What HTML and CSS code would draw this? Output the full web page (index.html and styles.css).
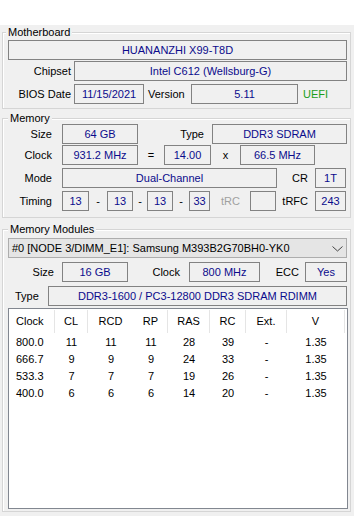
FILE: index.html
```html
<!DOCTYPE html>
<html lang="en">
<head>
    <meta charset="UTF-8">
    <title>Memory</title>
    <link rel="stylesheet" href="styles.css">
</head>
<body>
    <div class="tabbar"></div>

    <div class="group board">
        <span class="group-title">Motherboard</span>
        <div class="row">
            <div class="field f-name">HUANANZHI X99-T8D</div>
        </div>
        <div class="row mt1">
            <div class="label lbl-board">Chipset</div>
            <div class="field f-chipset">Intel C612 (Wellsburg-G)</div>
        </div>
        <div class="row mt3">
            <div class="label lbl-board">BIOS Date</div>
            <div class="field f-bios">11/15/2021</div>
            <div class="label lbl-version">Version</div>
            <div class="field f-version">5.11</div>
            <div class="label uefi">UEFI</div>
        </div>
    </div>

    <div class="group memory">
        <span class="group-title">Memory</span>
        <div class="row">
            <div class="label lbl-mem">Size</div>
            <div class="field f-size">64 GB</div>
            <div class="label lbl-type">Type</div>
            <div class="field f-type">DDR3 SDRAM</div>
        </div>
        <div class="row mt1">
            <div class="label lbl-mem">Clock</div>
            <div class="field f-size">931.2 MHz</div>
            <div class="label sep sep-eq">=</div>
            <div class="field f-mult">14.00</div>
            <div class="label sep sep-x">x</div>
            <div class="field f-bus">66.5 MHz</div>
        </div>
        <div class="row mt3">
            <div class="label lbl-mem">Mode</div>
            <div class="field f-mode">Dual-Channel</div>
            <div class="label lbl-cr">CR</div>
            <div class="field f-cr">1T</div>
        </div>
        <div class="row mt3">
            <div class="label lbl-mem">Timing</div>
            <div class="field f-t1">13</div>
            <div class="label sep sep-a">-</div>
            <div class="field f-t2">13</div>
            <div class="label sep sep-b">-</div>
            <div class="field f-t3">13</div>
            <div class="label sep sep-c">-</div>
            <div class="field f-t4">33</div>
            <div class="label lbl-trc">tRC</div>
            <div class="field f-trc"></div>
            <div class="label lbl-cr lbl-trfc">tRFC</div>
            <div class="field f-cr">243</div>
        </div>
    </div>

    <div class="group modules">
        <span class="group-title">Memory Modules</span>
        <div class="select">
            <span>#0 [NODE 3/DIMM_E1]: Samsung M393B2G70BH0-YK0</span>
            <svg class="chevron" width="11" height="6" viewBox="0 0 11 6">
                <path d="M0.5 0.5 L5.5 5 L10.5 0.5" fill="none" stroke="#444" stroke-width="1"/>
            </svg>
        </div>
        <div class="row mt4">
            <div class="label lbl-msize">Size</div>
            <div class="field f-msize">16 GB</div>
            <div class="label lbl-mclock">Clock</div>
            <div class="field f-mclock">800 MHz</div>
            <div class="label lbl-ecc">ECC</div>
            <div class="field f-ecc">Yes</div>
        </div>
        <div class="row mt4">
            <div class="label lbl-mtype">Type</div>
            <div class="field f-mtype">DDR3-1600 / PC3-12800 DDR3 SDRAM RDIMM</div>
        </div>

        <div class="listview">
            <div class="lv-head cols">
                <div class="c-clock">Clock</div>
                <div>CL</div>
                <div class="nodiv">RCD</div>
                <div>RP</div>
                <div>RAS</div>
                <div>RC</div>
                <div>Ext.</div>
                <div>V</div>
            </div>
            <div class="lv-row cols">
                <div class="c-clock">800.0</div><div>11</div><div>11</div><div>11</div><div>28</div><div>39</div><div>-</div><div>1.35</div>
            </div>
            <div class="lv-row cols">
                <div class="c-clock">666.7</div><div>9</div><div>9</div><div>9</div><div>24</div><div>33</div><div>-</div><div>1.35</div>
            </div>
            <div class="lv-row cols">
                <div class="c-clock">533.3</div><div>7</div><div>7</div><div>7</div><div>19</div><div>26</div><div>-</div><div>1.35</div>
            </div>
            <div class="lv-row cols">
                <div class="c-clock">400.0</div><div>6</div><div>6</div><div>6</div><div>14</div><div>20</div><div>-</div><div>1.35</div>
            </div>
        </div>
    </div>
</body>
</html>
```

FILE: styles.css
```css
body {
    margin: 0;
    width: 354px;
    height: 516px;
    overflow: hidden;
    background: #f0f0f0;
    font-family: "Liberation Sans", Arial, sans-serif;
    font-size: 11px;
    color: #000;
}

.tabbar {
    height: 25px;
    background: #fff;
}

/* group boxes */
.group {
    position: relative;
    box-sizing: border-box;
    width: 349px;
    margin-left: 2px;
    padding: 0 3px 0 5px;
    border: 1px solid #d5d5d5;
    box-shadow: inset 1px 1px 0 #fff;
}

.group-title {
    position: absolute;
    top: -7px;
    left: 5px;
    padding: 0 2px;
    line-height: 13px;
    background: #f0f0f0;
}

.board {
    margin-top: 7px;
    padding-top: 7px;
    padding-bottom: 4px;
}

.board .group-title {
    left: 3px;
}

.memory {
    margin-top: 9px;
    padding-top: 5px;
    padding-bottom: 6px;
}

.modules {
    margin-top: 11px;
    padding-top: 8px;
    padding-bottom: 2px;
}

/* rows and fields */
.row {
    display: flex;
    height: 20px;
}

.mt1 { margin-top: 1px; }
.mt3 { margin-top: 3px; }
.mt4 { margin-top: 4px; }

.label {
    box-sizing: border-box;
    line-height: 20px;
    white-space: nowrap;
}

.field {
    box-sizing: border-box;
    height: 20px;
    border: 1px solid #828282;
    color: #0b0b8c;
    text-align: center;
    line-height: 18px;
    white-space: nowrap;
    overflow: hidden;
}

.sep {
    text-align: center;
}

/* motherboard */
.f-name { width: 339px; }
.lbl-board { width: 63px; margin-right: 3px; text-align: right; }
.f-chipset { width: 273px; }
.f-bios { width: 70px; }
.lbl-version { width: 47px; padding-left: 4px; }
.f-version { width: 107px; }
.uefi { padding-left: 5px; color: #1a9e1a; }

/* memory */
.lbl-mem { width: 44px; margin-right: 10px; text-align: right; }
.f-size { width: 76px; }
.lbl-type { width: 74px; padding-right: 8px; text-align: right; }
.f-type { width: 135px; }
.sep-eq { width: 26px; }
.f-mult { width: 47px; }
.sep-x { width: 29px; }
.f-bus { width: 75px; }
.f-mode { width: 215px; }
.lbl-cr { width: 38px; padding-right: 7px; text-align: right; }
.f-cr { width: 31px; }
.f-t1 { width: 27px; }
.sep-a { width: 18px; }
.f-t2 { width: 26px; }
.sep-b { width: 14px; }
.f-t3 { width: 26px; }
.sep-c { width: 16px; }
.f-t4 { width: 21px; }
.lbl-trc { width: 40px; padding-left: 11px; color: #a0a0a0; }
.f-trc { width: 26px; }
.lbl-trfc { width: 39px; }

/* memory modules */
.select {
    box-sizing: border-box;
    display: flex;
    align-items: center;
    justify-content: space-between;
    width: 339px;
    height: 20px;
    padding: 0 3px 0 3px;
    border: 1px solid #adadad;
    background: #e5e5e5;
    white-space: nowrap;
}

.chevron {
    margin-top: 1px;
}

.lbl-msize { width: 46px; margin-right: 8px; text-align: right; }
.f-msize { width: 66px; }
.lbl-mclock { width: 61px; padding-right: 9px; text-align: right; }
.f-mclock { width: 71px; }
.lbl-ecc { width: 45px; padding-right: 6px; text-align: right; }
.f-ecc { width: 42px; }
.lbl-mtype { width: 40px; padding-left: 7px; }
.f-mtype { width: 299px; }

.listview {
    box-sizing: border-box;
    width: 340px;
    height: 201px;
    margin-top: 2px;
    border: 1px solid #828790;
    background: #fff;
}

.cols {
    display: grid;
    grid-template-columns: 46px 33px 46px 34px 42px 36px 41px 58px;
    text-align: center;
}

.lv-head {
    height: 25px;
    line-height: 25px;
}

.lv-head div {
    box-sizing: border-box;
    margin-top: 1px;
    height: 23px;
    line-height: 23px;
    border-right: 1px solid #e5e5e5;
}

.lv-head .nodiv {
    border-right-color: transparent;
}

.lv-row {
    height: 17px;
    line-height: 17px;
}

.c-clock {
    padding-left: 7px;
    text-align: left;
}
```
